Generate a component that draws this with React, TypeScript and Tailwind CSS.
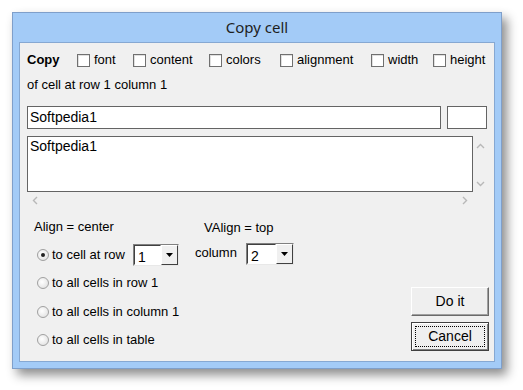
import React from "react";

const font = { fontFamily: '"Liberation Sans", Arial, sans-serif' };

function Check({ label, w }: { label: string; w: string }) {
  return (
    <div className={`flex items-center ${w}`}>
      <span className="w-[13px] h-[13px] border border-[#707070] bg-white shadow-[inset_1px_1px_0_#e0e0e0] shrink-0" />
      <span className="ml-[4px]">{label}</span>
    </div>
  );
}

function Radio({ checked }: { checked?: boolean }) {
  return (
    <span className="w-[12px] h-[12px] rounded-full border border-[#a0a0a0] bg-[radial-gradient(circle_at_40%_40%,#ffffff,#dcdcdc)] flex items-center justify-center shrink-0">
      {checked && <span className="w-[4px] h-[4px] rounded-full bg-[#222]" />}
    </span>
  );
}

function Select({ value, w }: { value: string; w: string }) {
  return (
    <div className={`flex h-[22px] ${w} border border-t-[#808080] border-l-[#808080] border-r-[#e8e8e8] border-b-[#e8e8e8] bg-white`}>
      <div className="flex-1 border border-t-[#404040] border-l-[#404040] border-r-transparent border-b-transparent pl-[3px] pt-[3px] leading-[16px] text-[14px]">
        {value}
      </div>
      <div className="w-[17px] bg-[#f0f0f0] border border-t-[#ffffff] border-l-[#ffffff] border-r-[#404040] border-b-[#404040] flex items-center justify-center">
        <svg width="7" height="4" viewBox="0 0 7 4"><path d="M0 0h7L3.5 4z" fill="#000" /></svg>
      </div>
    </div>
  );
}

export default function App() {
  return (
    <div className="w-[523px] h-[390px] bg-white pl-[12px] pt-[12px] text-[13px] text-black" style={font}>
      <div className="w-[490px] h-[357px] bg-[#a3cbf7] border border-[#7f9fca] shadow-[5px_6px_10px_rgba(0,0,0,0.45)] flex flex-col">
        <div className="h-[29px] flex items-center justify-center text-[15px] text-[#1e1e1e]" style={{ fontFamily: '"Noto Sans", "Open Sans", sans-serif' }}>
          Copy cell
        </div>
        <div className="mx-[6px] h-[320px] border border-[#86a8d2] bg-[#f0f0f0] flex flex-col pl-[7px] pr-[7px]">
          {/* row 1 */}
          <div className="flex items-center h-[16px] mt-[9px]">
            <div className="w-[50px] font-bold">Copy</div>
            <Check label="font" w="w-[56px]" />
            <Check label="content" w="w-[76px]" />
            <Check label="colors" w="w-[71px]" />
            <Check label="alignment" w="w-[91px]" />
            <Check label="width" w="w-[62px]" />
            <Check label="height" w="" />
          </div>
          <div className="h-[16px] mt-[9px] leading-[16px]">of cell at row 1 column 1</div>
          {/* inputs */}
          <div className="flex mt-[13px] h-[23px]">
            <div className="w-[414px] border border-[#646464] bg-white pl-[2px] leading-[20px] text-[14px]">Softpedia1</div>
            <div className="w-[40px] ml-[6px] border border-[#646464] bg-white" />
          </div>
          {/* textarea */}
          <div className="flex mt-[7px]">
            <div className="w-[446px] h-[56px] border border-[#646464] bg-white pl-[2px] pt-[1px] leading-[16px] text-[14px]">Softpedia1</div>
            <div className="flex-1 flex flex-col items-center justify-between pt-[7px] pb-[5px]">
              <svg width="9" height="6" viewBox="0 0 9 6"><path d="M1 5l3.5-3.5L8 5" stroke="#b8b8b8" strokeWidth="1.4" fill="none" /></svg>
              <svg width="9" height="6" viewBox="0 0 9 6"><path d="M1 1l3.5 3.5L8 1" stroke="#b8b8b8" strokeWidth="1.4" fill="none" /></svg>
            </div>
          </div>
          <div className="flex justify-between w-[446px] h-[16px] items-center pl-[5px] pr-[5px]">
            <svg width="6" height="9" viewBox="0 0 6 9"><path d="M5 1L1.5 4.5L5 8" stroke="#b8b8b8" strokeWidth="1.4" fill="none" /></svg>
            <svg width="6" height="9" viewBox="0 0 6 9"><path d="M1 1l3.5 3.5L1 8" stroke="#b8b8b8" strokeWidth="1.4" fill="none" /></svg>
          </div>
          {/* bottom */}
          <div className="flex flex-1">
            <div className="flex flex-col w-[385px]">
              <div className="flex h-[16px] mt-[11px] items-center">
                <div className="ml-[7px] w-[170px]">Align = center</div>
                <div className="mt-[1px]">VAlign = top</div>
              </div>
              <div className="flex items-center mt-[8px] h-[23px]">
                <div className="ml-[10px]"><Radio checked /></div>
                <span className="ml-[3px]">to cell at row</span>
                <div className="ml-[8px] mt-[1px]"><Select value="1" w="w-[46px]" /></div>
                <span className="ml-[16px] -mt-[4px]">column</span>
                <div className="ml-[9px] -mt-[1px]"><Select value="2" w="w-[48px]" /></div>
              </div>
              <div className="flex items-center mt-[9px] h-[16px]">
                <div className="ml-[10px]"><Radio /></div>
                <span className="ml-[3px]">to all cells in row 1</span>
              </div>
              <div className="flex items-center mt-[13px] h-[16px]">
                <div className="ml-[10px]"><Radio /></div>
                <span className="ml-[3px]">to all cells in column 1</span>
              </div>
              <div className="flex items-center mt-[12px] h-[16px]">
                <div className="ml-[10px]"><Radio /></div>
                <span className="ml-[3px]">to all cells in table</span>
              </div>
            </div>
            <div className="flex flex-col ml-auto mr-[-2px] mt-[79px]">
              <div className="w-[78px] h-[29px] bg-[#efefef] border border-t-[#ffffff] border-l-[#ffffff] border-r-[#6a6a6a] border-b-[#6a6a6a] shadow-[inset_-1px_-1px_0_#a0a0a0] flex items-center justify-center text-[14px]">
                Do it
              </div>
              <div className="w-[78px] h-[29px] mt-[6px] bg-[#efefef] border border-[#404040] shadow-[inset_1px_1px_0_#ffffff,inset_-1px_-1px_0_#808080] flex items-center justify-center p-[3px]">
                <div className="w-full h-full border border-dotted border-black flex items-center justify-center text-[14px]">Cancel</div>
              </div>
            </div>
          </div>
        </div>
      </div>
    </div>
  );
}
